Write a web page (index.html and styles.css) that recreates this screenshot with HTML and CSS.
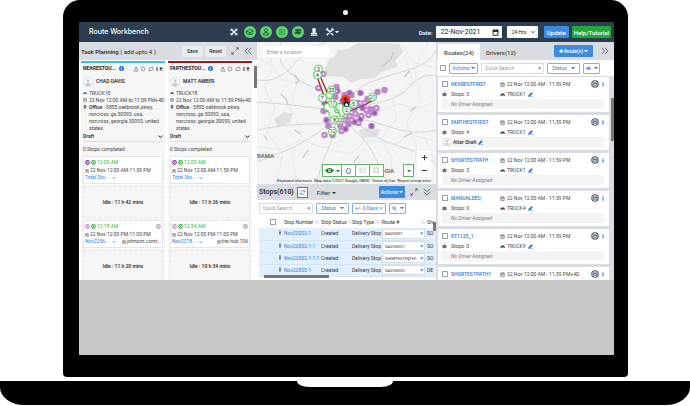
FILE: index.html
```html
<!DOCTYPE html>
<html lang="en">
<head>
    <meta charset="utf-8">
    <meta name="viewport" content="width=device-width, initial-scale=1">
    <link rel="stylesheet" href="styles.css">
    <title>Route Workbench</title>
</head>
<body>
<!-- shared icons -->
<svg class="sprite" aria-hidden="true">
    <symbol id="caret" viewBox="0 0 6 6"><path d="M0 1.500h6L3 5z" fill="currentColor"/></symbol>
    <symbol id="chevron" viewBox="0 0 6 6"><path d="M.8 1.800L3 4.200l2.200-2.400" fill="none" stroke="currentColor" stroke-width="1.200"/></symbol>
    <symbol id="expand" viewBox="0 0 10 10"><path d="M6 4l3-3M6.500 1H9v2.500M4 6L1 9M1 6.500V9h2.500" fill="none" stroke="currentColor"/></symbol>
    <symbol id="double" viewBox="0 0 10 10"><path d="M5 1L1.500 5 5 9M9 1L5.500 5 9 9" fill="none" stroke="currentColor"/></symbol>
    <symbol id="truck" viewBox="0 0 10 10"><path d="M1 8V5.500L3 3h5l1.500 2.500V8H8V7H3v1z" fill="currentColor"/></symbol>
    <symbol id="cal" viewBox="0 0 10 10"><path d="M1.500 2h7v7h-7zM1.500 4h7M3.500 1v2M6.500 1v2M3 6h4" fill="none" stroke="currentColor"/></symbol>
    <symbol id="pin" viewBox="0 0 10 10"><path d="M5 0a3.500 3.500 0 0 1 3.500 3.500C8.500 6 5 10 5 10S1.500 6 1.500 3.500A3.500 3.500 0 0 1 5 0z" fill="currentColor"/><circle cx="5" cy="3.500" r="1.300" fill="#fff"/></symbol>
    <symbol id="avatar" viewBox="0 0 12 12"><circle cx="6" cy="6" r="5.300" fill="#fff" stroke="#c3ccd4" stroke-width=".8"/><circle cx="6" cy="4.600" r="1.900" fill="#c3ccd4"/><path d="M2.500 9.500Q3 7 6 7t3.500 2.500Q6 12 2.500 9.500" fill="#c3ccd4"/></symbol>
    <symbol id="info" viewBox="0 0 10 10"><circle cx="5" cy="5" r="5" fill="#1a73e8"/><path d="M5 2v1.500M5 4.500V8" stroke="#fff" stroke-width="1.600"/></symbol>
    <symbol id="cardtools" viewBox="0 0 30 6"><path d="M3 1L1 5h4zM3 1v1.500" fill="none" stroke="#777" stroke-width=".7"/><circle cx="10" cy="3" r="1.900" fill="none" stroke="#777" stroke-width=".7"/><path d="M15.500 3.500q0-2 2.500-2h1.500M20.500 2.500q0 2-2.500 2h-1.500M19 .7l1 .8-1 .8M17 3.700l-1 .8 1 .8" fill="none" stroke="#777" stroke-width=".7"/><path d="M24 1v4" stroke="#333" stroke-width="1"/><path d="M26.800 1.600l2.400 2.800M29.200 1.600l-2.400 2.800" stroke="#111" stroke-width="1.100"/></symbol>
    <symbol id="stopdot" viewBox="0 0 10 10"><circle cx="5" cy="5" r="3.600" fill="#fff" stroke="currentColor" stroke-width="2.400"/><circle cx="5" cy="5" r="1.200" fill="currentColor"/></symbol>
    <symbol id="cube" viewBox="0 0 10 10"><path d="M5 1l4 2v4L5 9 1 7V3z" fill="#555"/><path d="M1.500 3.300L5 5l3.500-1.700M5 5v4" stroke="#ddd" stroke-width=".7" fill="none"/></symbol>
    <symbol id="pencil" viewBox="0 0 10 10"><path d="M1 9l.5-2.500L7 1l2 2-5.500 5.500zM5 9h5" fill="#1a73e8" stroke="#1a73e8"/></symbol>
    <symbol id="clock" viewBox="0 0 10 10"><circle cx="5" cy="5" r="4" fill="#fff" stroke="#465563" stroke-width="1.400"/><path d="M3 3.600h4v3H3zM3 4.500h4" fill="none" stroke="#465563"/></symbol>
    <symbol id="dots" viewBox="0 0 4 10"><path d="M2 1v2M2 4v2M2 7v2" stroke="currentColor" stroke-width="3"/></symbol>
    <symbol id="eye" viewBox="0 0 12 8"><path d="M0 4q6-7 12 0-6 7-12 0" fill="currentColor"/><circle cx="6" cy="4" r="2" fill="#fff"/><circle cx="6" cy="4" r="1" fill="currentColor"/></symbol>
    <symbol id="sort" viewBox="0 0 8 8"><path d="M2 7V1M.8 2.500L2 1l1.200 1.500M6 1v6M4.800 5.500L6 7l1.200-1.500" fill="none" stroke="#aaa" stroke-width=".8"/></symbol>
</svg>

<div class="laptop">
<div class="lid">
<span class="camera"></span>
<div class="screen">

<header class="navbar">
    <h1>Route Workbench</h1>
    <nav class="nav-icons">
        <button aria-label="Full screen"><svg viewBox="0 0 12 12"><path d="M3 3l6 6M9 3L3 9" stroke="#fff" stroke-width="1.600"/><path d="M2 2h3L2 5zM10 2v3L7 2zM2 10V7l3 3zM10 10H7l3-3z" fill="#fff"/></svg></button>
        <button class="round" aria-label="Routes"><svg viewBox="0 0 12 12"><path d="M2 5l4-2 4 2-4 2zM2 5v2.500l4 2 4-2M6 7v2" fill="none" stroke="#1f5138"/></svg></button>
        <button class="round" aria-label="Drivers"><svg viewBox="0 0 12 12"><circle cx="6" cy="4" r="1.800" fill="none" stroke="#1f5138"/><path d="M2.500 9.500Q3 6.500 6 6.500t3.500 3z" fill="none" stroke="#1f5138"/></svg></button>
        <button class="round" aria-label="Table"><svg viewBox="0 0 12 12"><path d="M3 3h6v6H3zM3 5h6M3 7h6M5 3v6" fill="none" stroke="#2d8e4c" stroke-width=".7"/></svg></button>
        <button class="round" aria-label="Signs"><svg viewBox="0 0 12 12"><path d="M3 3h6l1 1-1 1H3zM9 6H3L2 7l1 1h6zM6 2v8" fill="#1f5138" stroke="#1f5138" stroke-width=".5"/></svg></button>
        <button aria-label="Stamp"><svg viewBox="0 0 12 12"><path d="M4 1.500h4v3L7.500 7h2v1.500h-7V7h2L4 4.500zM2 9h8v1.500H2z" fill="#fff"/></svg></button>
        <button class="tools" aria-label="Tools"><svg viewBox="0 0 12 12"><path d="M2 2l8 8M10 2L2 10M1.500 3.500l2-2M8.500 1.500v2h2" fill="none" stroke="#fff" stroke-width="1.600"/></svg><svg class="caret"><use href="#caret"/></svg></button>
    </nav>
    <label class="date-label" for="date">Date:</label>
    <span class="date-box"><input id="date" type="text" value="22-Nov-2021"><svg viewBox="0 0 10 10"><path d="M1.500 2h7v7h-7zM3 0v2M7 0v2" fill="none" stroke="#111" stroke-width="1.200"/><path d="M1 2h8v2H1z" fill="#111"/></svg></span>
    <span class="select-box hours"><select aria-label="Hours"><option>24 Hrs</option></select><svg class="caret"><use href="#chevron"/></svg></span>
    <button class="btn primary update">Update</button>
    <button class="btn success">Help/Tutorial</button>
</header>

<main class="workbench">

<!-- task planning -->
<section class="planning">
    <div class="panel-bar">
        <h2>Task Planning <small>( add upto 4 )</small></h2>
        <button class="btn light">Save</button>
        <button class="btn light">Reset</button>
        <svg class="ico"><use href="#expand"/></svg>
        <svg class="ico"><use href="#double"/></svg>
    </div>
    <div class="tasks">
        <article class="task blue">
            <div class="task-title"><h3>NEARESTOU...</h3><svg class="info"><use href="#info"/></svg><svg class="cardtools"><use href="#cardtools"/></svg></div>
            <div class="driver"><svg><use href="#avatar"/></svg>CHAD DAVIS</div>
            <ul class="facts">
                <li><svg><use href="#truck"/></svg>TRUCK18</li>
                <li><svg><use href="#cal"/></svg>22 Nov 12:00 AM to 11:59 PM+4D</li>
                <li><svg><use href="#pin"/></svg><span><b>Office</b> - 5855 oakbrook pkwy,<br>norcross, ga 30093, usa,<br>norcross, georgia 30093, united<br>states</span></li>
            </ul>
            <div class="draft"><select aria-label="Route state"><option>Draft</option></select><svg class="caret"><use href="#chevron"/></svg></div>
            <p class="completed">0 Stops completed</p>
            <div class="stop">
                <div class="time"><svg class="purple"><use href="#stopdot"/></svg><svg><use href="#stopdot"/></svg>12:00 AM</div>
                <div class="span"><svg><use href="#cal"/></svg>22 Nov 12:00 AM-11:59 PM</div>
                <div class="ref"><a href="#">Total Sto...</a><svg class="caret"><use href="#chevron"/></svg></div>
            </div>
            <div class="idle">Idle : 11 h 42 mins</div>
            <div class="stop">
                <div class="time"><svg class="lilac"><use href="#stopdot"/></svg><svg><use href="#stopdot"/></svg>12:18 AM<svg class="gear"><use href="#stopdot"/></svg></div>
                <div class="span"><svg><use href="#cal"/></svg>22 Nov 12:00 PM-11:00 PM</div>
                <div class="ref"><a href="#">Nov2256...</a><svg class="caret"><use href="#chevron"/></svg><span><svg><use href="#cal"/></svg>johnson contr...</span></div>
            </div>
            <div class="idle">Idle : 11 h 20 mins</div>
        </article>
        <article class="task red">
            <div class="task-title"><h3>FARTHESTOU...</h3><svg class="info"><use href="#info"/></svg><svg class="cardtools"><use href="#cardtools"/></svg></div>
            <div class="driver"><svg><use href="#avatar"/></svg>MATT AMBER</div>
            <ul class="facts">
                <li><svg><use href="#truck"/></svg>TRUCK18</li>
                <li><svg><use href="#cal"/></svg>22 Nov 12:00 AM to 11:59 PM+4D</li>
                <li><svg><use href="#pin"/></svg><span><b>Office</b> - 5855 oakbrook pkwy,<br>norcross, ga 30093, usa,<br>norcross, georgia 30093, united<br>states</span></li>
            </ul>
            <div class="draft"><select aria-label="Route state"><option>Draft</option></select><svg class="caret"><use href="#chevron"/></svg></div>
            <p class="completed">0 Stops completed</p>
            <div class="stop">
                <div class="time"><svg class="purple"><use href="#stopdot"/></svg><svg><use href="#stopdot"/></svg>12:00 AM</div>
                <div class="span"><svg><use href="#cal"/></svg>22 Nov 12:00 AM-11:59 PM</div>
                <div class="ref"><a href="#">Total Sto...</a><svg class="caret"><use href="#chevron"/></svg></div>
            </div>
            <div class="idle">Idle : 11 h 26 mins</div>
            <div class="stop">
                <div class="time"><svg class="lilac"><use href="#stopdot"/></svg><svg><use href="#stopdot"/></svg>12:34 AM<svg class="gear"><use href="#stopdot"/></svg></div>
                <div class="span"><svg><use href="#cal"/></svg>22 Nov 12:00 PM-11:00 PM</div>
                <div class="ref"><a href="#">Nov2218...</a><svg class="caret"><use href="#chevron"/></svg><span><svg><use href="#cal"/></svg>tire hub 106</span></div>
            </div>
            <div class="idle">Idle : 10 h 34 mins</div>
        </article>
        <span class="thumb"></span>
    </div>
</section>

<!-- map and stops -->
<section class="center">
    <div class="map">
        <svg class="map-art" viewBox="0 0 180 142" preserveAspectRatio="xMidYMid slice">
            <path fill="#e0e0e0" d="M73 17l5-3 4-6 9-1 10-6h30l12 1 4 8-8 8 2 7-16 5-7 6-14 1-9 4-8-6-16-1-3-8zM18 77l10-7 8 2-2 8-12 6zM102 88l12-3 10 3-4 7-14 1z"/>
            <g fill="none" stroke="#d6d6d6" stroke-width="1">
                <path d="M0 38q20 4 36-14T70 0M0 60q30 2 52 5t30 2 34-5 38-18 26-10M24 0q-4 20 8 30t26 16 20 18 20 24 22 30 12 24M0 88q30-6 54-6t36-4 40 6 50 4M60 142q4-20 12-36t8-38M84 66q14-20 30-26t38-12 28-20M0 120q30-10 50-22t30-24M100 80q20 18 42 24t38 18"/>
            </g>
            <g fill="none" stroke="#e4e4e4" stroke-width=".7">
                <path d="M0 16l16 8 10 14 24 4 10 14M10 0l6 24-8 20 10 22-8 24 16 22-6 30M40 142l-4-30 10-22-12-24 6-24-8-20M130 142l6-26-12-18 16-22-4-20 20-16-6-22M180 60l-20 6-18-4-22 8M180 100l-26-8-14 10-30-4-16 14-20-4M106 142l-4-28 10-16M156 142l4-38-10-24 14-22-6-30 14-28M0 104l24 4 20-10 24 8 18-8M166 88l14 38M144 0l12 20 24 6"/>
            </g>
            <path fill="none" stroke="#c4c4c4" stroke-width="1.200" d="M38 32l4 7-3 3M24 52l6 5 1 6M126 24l8-6 3-8M38 88l6 4M52 108l-6 8M147 95l8-4M154 69l5-4M102 114l-5 7M7 93l4 5M148 35l5-6"/>
            <path stroke="#a51c1c" stroke-width="1.300" fill="none" d="M61 36l7 19M64 35l8 19M92 70l24-11M70 60l10 16"/>
            <!-- clustered stops -->
            <g fill="none" stroke-linecap="round">
                <path stroke="#a04fb0" stroke-opacity=".65" stroke-width="6.500" d="M67 32h0M62 46h0M80 45h0M81 49h0M93 51h0M104 51h0M95 53h0M121 50h0M128 48h0M111 57h0M120 66h0M118 71h0M115 84h0M70 78h0M68 93h0M76 93h0M85 89h0M89 87h0M95 78h0M102 81h0M99 72h0M105 74h0M110 68h0M112 73h0M106 66h0M102 61h0M108 61h0M86 59h0M88 53h0M79 55h0M70 67h0M67 69h0M88 78h0M92 82h0M84 84h0M72 84h0M98 67h0M104 77h0M87 63h0M93 74h0M79 73h0M114 67h0M68 61h0M98 80h0"/>
                <path stroke="#8a3c9c" stroke-width="4" stroke-opacity=".6" d="M93 51h0M81 49h0M104 51h0M115 84h0M118 71h0M106 66h0M104 77h0M89 87h0M98 80h0M68 61h0M70 78h0"/>
                <path stroke="#e6cdea" stroke-width="2.500" d="M67 32h0M62 46h0M80 49h0M104 61h0M110 68h0M120 66h0M105 74h0M95 78h0M102 81h0M68 93h0M85 89h0M88 78h0M112 73h0M99 72h0M93 74h0M115 57h0M108 61h0"/>
                <path stroke="#4fcf5a" stroke-width="8" d="M73 53h0M71 65h0M75 68h0M83 65h0M86 70h0M80 74h0M76 72h0M84 76h0"/>
                <path stroke="#f4f8ef" stroke-width="6" d="M73 53h0M71 65h0M75 68h0M83 65h0M86 70h0M80 74h0M76 72h0M84 76h0"/>
            </g>
            <g class="pins">
                <circle cx="62" cy="27" r="4"/><text x="62" y="29">3</text>
                <circle cx="61" cy="33" r="4"/><text x="61" y="35">4</text>
                <circle cx="66" cy="56" r="4"/><text x="66" y="58">7</text>
                <circle cx="75" cy="48" r="4"/><text x="75" y="50">33</text>
                <circle cx="76" cy="61" r="4"/><text x="76" y="63">17</text>
                <circle cx="116" cy="55" r="4"/><text x="116" y="57">21</text>
                <circle cx="97" cy="62" r="4"/><text x="97" y="64">5</text>
                <circle cx="90" cy="68" r="4"/><text x="90" y="70">2</text>
                <circle cx="78" cy="78" r="4"/><text x="78" y="80">8</text>
                <circle cx="83" cy="78" r="4"/><text x="83" y="80">22</text>
                <circle cx="76" cy="89" r="4"/><text x="76" y="91">12</text>
            </g>
            <circle cx="89" cy="58" r="5" fill="#f23d2e"/><circle cx="89" cy="57" r="2" fill="#8d1710"/>
            <circle cx="90" cy="62" r="3" fill="#16294f"/><path d="M88.500 62.500l1.500-1.500 1.500 1.500v1.500h-3z" fill="#fff"/>
        </svg>
        <input class="location" type="text" placeholder="Enter a location" aria-label="Enter a location">
        <span class="state left">BAMA</span>
        <div class="map-controls">
            <div class="map-group">
                <button class="eye" aria-label="Visibility"><svg><use href="#eye"/></svg><svg class="caret"><use href="#caret"/></svg></button>
                <button aria-label="Pan"><svg viewBox="0 0 10 10"><path d="M3 9L1.500 6l1.500-.5V2.500q1-1 1.500 0 .5-1.500 1.500 0 1-.8 1.500.8v3L7 9z" fill="none" stroke="#555"/></svg></button>
                <button aria-label="Polygon"><svg viewBox="0 0 10 10"><path d="M1 2l3 2 4-3 1 6-6 1z" fill="none" stroke="#888" stroke-dasharray="1.500 1"/></svg></button>
                <button aria-label="Rectangle"><svg viewBox="0 0 10 10"><path d="M1.500 1.500h6v6h-6zM7 7l2 2" fill="none" stroke="#888" stroke-dasharray="1.500 .7"/></svg></button>
            </div>
            <span class="state">GIA</span>
            <button class="more" aria-label="More"><svg class="caret"><use href="#caret"/></svg></button>
            <div class="zoom"><button aria-label="Zoom in"><svg viewBox="0 0 8 8"><path d="M1 4h6M4 1v6" stroke="#444" stroke-width="1.300"/></svg></button><button aria-label="Zoom out"><svg viewBox="0 0 8 8"><path d="M1 4h6" stroke="#444" stroke-width="1.300"/></svg></button></div>
        </div>
        <div class="credits"><span>Keyboard shortcuts</span><span>Map data ©2021 Google, INEGI</span><a href="#">Terms of Use</a><a href="#">Report a map error</a></div>
    </div>
    <div class="panel-bar stops-bar">
        <h2>Stops(610)</h2>
        <button class="refresh" aria-label="Refresh"><svg viewBox="0 0 10 10"><path d="M2 4a3.300 3.300 0 0 1 6 0M8 6a3.300 3.300 0 0 1-6 0M8.500 1.500V4H6M1.500 8.500V6H4" fill="none" stroke="#2b7de1"/></svg></button>
        <button class="filter">Filter <svg class="caret"><use href="#caret"/></svg></button>
        <button class="btn primary">Actions <svg class="caret"><use href="#caret"/></svg></button>
        <svg class="ico"><use href="#expand"/></svg>
        <svg class="ico down"><use href="#double"/></svg>
    </div>
    <div class="toolbar">
        <span class="search"><input type="text" placeholder="Quick Search" aria-label="Quick search stops">×</span>
        <button class="outline status">Status <svg class="caret"><use href="#caret"/></svg></button>
        <button class="outline">+/- 0 Days <svg class="caret"><use href="#chevron"/></svg></button>
        <button class="outline find" aria-label="Find"><svg viewBox="0 0 10 10"><circle cx="4" cy="4" r="2.500" fill="none" stroke="currentColor" stroke-width="1.500"/><path d="M6 6l3 3" stroke="currentColor" stroke-width="1.500"/></svg><svg class="caret"><use href="#caret"/></svg></button>
    </div>
    <div class="stops">
        <table>
            <colgroup><col class="c-check"><col class="c-number"><col class="c-status"><col class="c-type"><col class="c-route"><col></colgroup>
            <tr><th><input type="checkbox" aria-label="Select all"></th><th>Stop Number <svg><use href="#sort"/></svg></th><th>Stop Status <svg><use href="#sort"/></svg></th><th>Stop Type <svg><use href="#sort"/></svg></th><th><span class="route-head">Route # <svg><use href="#sort"/></svg></span></th><th>Shi</th></tr>
            <tr><td><svg class="dots"><use href="#dots"/></svg></td><td><a href="#">Nov22002-1</a></td><td>Created</td><td>Delivery Stop</td><td><span class="route-box">DAVIS001 <b>×</b></span></td><td>SO</td></tr>
            <tr><td><svg class="dots"><use href="#dots"/></svg></td><td><a href="#">Nov22002-1-1</a></td><td>Created</td><td>Delivery Stop</td><td><span class="route-box">DAVIS0031 <b>×</b></span></td><td>SO</td></tr>
            <tr><td><svg class="dots"><use href="#dots"/></svg></td><td><a href="#">Nov22002-1-1-1</a></td><td>Created</td><td>Delivery Stop</td><td><span class="route-box">SHORTESTPATH1 <b>×</b></span></td><td>SO</td></tr>
            <tr><td><svg class="dots"><use href="#dots"/></svg></td><td><a href="#">Nov22003-1</a></td><td>Created</td><td>Delivery Stop</td><td><span class="route-box">DAVIS0002 <b>×</b></span></td><td>DE</td></tr>
        </table>
        <span class="thumb"></span>
        <span class="thumb across"></span>
    </div>
</section>

<!-- routes -->
<section class="routes">
    <div class="panel-bar tabs">
        <button class="tab active">Routes(24)</button>
        <button class="tab">Drivers(12)</button>
        <button class="btn primary"><b>✚</b> Route(s) <svg class="caret"><use href="#caret"/></svg></button>
        <svg class="ico flip"><use href="#double"/></svg>
    </div>
    <div class="toolbar">
        <input type="checkbox" aria-label="Select all routes">
        <button class="outline">Actions <svg class="caret"><use href="#caret"/></svg></button>
        <span class="search"><input type="text" placeholder="Quick Search" aria-label="Quick search routes">×</span>
        <button class="outline status">Status <svg class="caret"><use href="#caret"/></svg></button>
        <button class="outline look" aria-label="Columns"><svg class="eye-ico"><use href="#eye"/></svg><svg class="caret"><use href="#caret"/></svg></button>
    </div>
    <div class="route-list">
        <article class="route">
            <input type="checkbox" aria-label="NEARESTFIRST"><a href="#">NEARESTFIRST</a><span><svg><use href="#cal"/></svg>22 Nov 12:00 AM - 11:59 PM</span><svg class="clock"><use href="#clock"/></svg><svg class="dots"><use href="#dots"/></svg>
            <svg><use href="#cube"/></svg><span>Stops: 3</span><span class="truck"><svg><use href="#truck"/></svg>TRUCK1<svg class="pencil"><use href="#pencil"/></svg></span>
            <p>No Driver Assigned</p>
        </article>
        <article class="route">
            <input type="checkbox" aria-label="FARTHESTFIRST"><a href="#">FARTHESTFIRST</a><span><svg><use href="#cal"/></svg>22 Nov 12:00 AM - 11:59 PM</span><svg class="clock"><use href="#clock"/></svg><svg class="dots"><use href="#dots"/></svg>
            <svg><use href="#cube"/></svg><span>Stops: 4</span><span class="truck"><svg><use href="#truck"/></svg>TRUCK1<svg class="pencil"><use href="#pencil"/></svg></span>
            <p class="assigned"><svg><use href="#avatar"/></svg>Altar Shafi<svg class="pencil"><use href="#pencil"/></svg></p>
        </article>
        <article class="route">
            <input type="checkbox" aria-label="SHORTESTPATH"><a href="#">SHORTESTPATH</a><span><svg><use href="#cal"/></svg>22 Nov 12:00 AM - 11:59 PM</span><svg class="clock"><use href="#clock"/></svg><svg class="dots"><use href="#dots"/></svg>
            <svg><use href="#cube"/></svg><span>Stops: 3</span><span class="truck"><svg><use href="#truck"/></svg>TRUCK1<svg class="pencil"><use href="#pencil"/></svg></span>
            <p>No Driver Assigned</p>
        </article>
        <article class="route">
            <input type="checkbox" aria-label="MANUALSEQ"><a href="#">MANUALSEQ</a><span><svg><use href="#cal"/></svg>22 Nov 12:00 AM - 11:59 PM</span><svg class="clock"><use href="#clock"/></svg><svg class="dots"><use href="#dots"/></svg>
            <svg><use href="#cube"/></svg><span>Stops: 0</span><span class="truck"><svg><use href="#truck"/></svg>TRUCK4<svg class="pencil"><use href="#pencil"/></svg></span>
            <p>No Driver Assigned</p>
        </article>
        <article class="route">
            <input type="checkbox" aria-label="RT1125_1"><a href="#">RT1125_1</a><span><svg><use href="#cal"/></svg>22 Nov 12:00 AM - 11:59 PM</span><svg class="clock"><use href="#clock"/></svg><svg class="dots"><use href="#dots"/></svg>
            <svg><use href="#cube"/></svg><span>Stops: 0</span><span class="truck"><svg><use href="#truck"/></svg>TRUCK9<svg class="pencil"><use href="#pencil"/></svg></span>
            <p>No Driver Assigned</p>
        </article>
        <article class="route">
            <input type="checkbox" aria-label="SHORTESTPATH1"><a href="#">SHORTESTPATH1</a><span><svg><use href="#cal"/></svg>22 Nov 12:00 AM - 11:59 PM+4D</span><svg class="clock"><use href="#clock"/></svg><svg class="dots"><use href="#dots"/></svg>
        </article>
        <span class="thumb"></span>
    </div>
</section>

</main>
</div>
</div>
<div class="base"><span class="notch"></span></div>
</div>
</body>
</html>
```
FILE: styles.css
```css
* {
    box-sizing: border-box;
}
body {
    margin: 0;
    background: #fff;
    color: #333;
    font: 5px/7px Roboto, "Liberation Sans", sans-serif;
}
h1, h2, h3, p, ul {
    margin: 0;
    padding: 0;
}
button, input, select {
    margin: 0;
    padding: 0;
    border: 0;
    background: none;
    color: inherit;
    font: inherit;
    min-width: 0;
}
select {
    appearance: none;
    width: 100%;
}
svg {
    width: 5px;
    height: 5px;
    flex: none;
}
a {
    color: #2b7de1;
    text-decoration: none;
}
input[type=checkbox] {
    appearance: none;
    width: 6px;
    height: 6px;
    border: 1px solid #9aa4ad;
    background: #fff;
    flex: none;
}
input::placeholder {
    color: #999;
}
.sprite {
    position: absolute;
    width: 0;
    height: 0;
}
.caret {
    width: 4px;
    height: 4px;
}

/* laptop */
.laptop {
    overflow: hidden;
}
.lid {
    position: relative;
    margin: 0 62px 0 63px;
    padding: 22px 14px 22px 16px;
    background: #000;
    border-radius: 17px 17px 4px 4px;
}
.camera {
    position: absolute;
    top: 10px;
    left: 50%;
    width: 5px;
    height: 5px;
    margin-left: -3px;
    border-radius: 50%;
    background: #fff;
}
.screen {
    background: #c7c7c7;
    padding-bottom: 75px;
}
.base {
    height: 24px;
    margin-top: 4px;
    background: #000;
    border-radius: 0 0 24px 24px / 0 0 18px 18px;
}
.notch {
    display: block;
    width: 96px;
    height: 6px;
    margin: 0 auto;
    background: #fff;
    border-radius: 0 0 12px 12px / 0 0 6px 6px;
}

/* top bar */
.navbar {
    display: flex;
    align-items: center;
    height: 20px;
    padding: 0 3px 0 10px;
    background: #2c3e50;
    color: #fff;
}
.navbar h1 {
    width: 139px;
    font: 500 7px/10px Inter, sans-serif;
}
.nav-icons {
    display: flex;
    align-items: center;
    gap: 4px;
    flex: 1;
}
.nav-icons button {
    display: flex;
    align-items: center;
    justify-content: center;
    width: 12px;
    height: 12px;
}
.nav-icons svg {
    width: 10px;
    height: 10px;
}
.nav-icons .round {
    border-radius: 50%;
    background: #5fd46b;
}
.nav-icons .tools {
    width: 15px;
}
.nav-icons .caret {
    width: 4px;
    height: 4px;
}
.date-label {
    font-size: 6px;
    font-weight: 500;
    margin-right: 3px;
}
.date-box, .select-box {
    display: flex;
    align-items: center;
    height: 12px;
    padding: 0 3px 0 5px;
    background: #fff;
    color: #222;
}
.date-box {
    width: 66px;
    font-size: 7px;
    margin-right: 5px;
}
.date-box input {
    flex: 1;
}
.date-box svg {
    width: 7px;
    height: 7px;
}
.hours {
    width: 31px;
    margin-right: 6px;
    border-radius: 1px;
}
.btn {
    height: 12px;
    padding: 0 4px;
    border-radius: 1px;
    font-weight: 500;
    white-space: nowrap;
}
.primary {
    background: #3d8ae3;
    color: #fff;
}
.success {
    background: #21a83c;
    color: #fff;
    font-size: 6px;
    padding: 0 2px;
}
.update {
    font-size: 6px;
    padding: 0 3px;
    margin-right: 3px;
}

/* panels */
.workbench {
    display: grid;
    grid-template-columns: 178fr 180fr 177fr;
    height: 238px;
    overflow: hidden;
}
.workbench > section {
    min-width: 0;
    overflow: hidden;
    background: #fff;
}
.panel-bar {
    display: flex;
    align-items: center;
    height: 18px;
    padding: 0 5px 0 2px;
    background: #d9dde1;
}
.panel-bar h2 {
    flex: 1;
    font-size: 6px;
    font-weight: 500;
    color: #222;
    white-space: nowrap;
}
.panel-bar small {
    font-size: 6px;
    font-weight: 400;
}
.ico {
    width: 8px;
    height: 8px;
    margin-left: 5px;
    color: #4b5763;
}
.down {
    transform: rotate(-90deg);
}
.flip {
    transform: rotate(180deg);
}
.light {
    height: 11px;
    width: 21px;
    background: #e9ebed;
    margin-left: 2px;
}
.thumb {
    position: absolute;
    right: 0;
    width: 3px;
    background: #777;
}

/* task planning */
.tasks {
    position: relative;
    display: grid;
    grid-template-columns: 1fr 1fr;
    gap: 3px;
    padding: 1px 5px 0 2px;
}
.tasks .thumb {
    top: 6px;
    height: 22px;
}
.task {
    min-width: 0;
    background: #f6f6f6;
    border-top: 2px solid #25c7f5;
    padding: 0 2px;
    color: #444;
}
.task.red {
    border-color: #b11217;
}
.task-title {
    display: flex;
    align-items: center;
    height: 11px;
}
.task-title h3 {
    font-size: 5px;
    font-weight: 700;
    color: #222;
}
.task-title .info {
    margin: 0 auto 0 3px;
}
.task-title .cardtools {
    width: 30px;
    height: 6px;
}
.driver {
    display: flex;
    align-items: center;
    gap: 3px;
    height: 15px;
    margin-bottom: 1px;
    font-weight: 500;
    color: #222;
}
.driver svg {
    width: 10px;
    height: 10px;
}
.facts {
    list-style: none;
    white-space: nowrap;
}
.facts li {
    display: flex;
    gap: 2px;
}
.facts svg {
    width: 4px;
    height: 4px;
    margin-top: 1px;
    color: #555;
}
.facts b {
    font-weight: 500;
    color: #222;
}
.draft {
    display: flex;
    align-items: center;
    height: 10px;
    margin-bottom: 1px;
    border-bottom: 1px solid #ddd;
    font-weight: 500;
    color: #222;
}
.draft .caret {
    width: 5px;
    height: 5px;
}
.completed {
    padding: 3px 0;
}
.stop, .idle {
    border: 1px solid #e6e6e6;
    margin-bottom: 2px;
}
.stop {
    height: 28px;
    padding: 1px 1px 0;
    background: #fff;
    white-space: nowrap;
}
.stop div {
    display: flex;
    align-items: center;
    gap: 1px;
}
.time {
    height: 9px;
    color: #2eb844;
}
.time svg {
    color: #2eb844;
}
.time .purple {
    color: #8e3aa5;
}
.time .lilac {
    color: #c48fd0;
}
.time .gear {
    color: #aaa;
    margin-left: auto;
}
.span svg, .ref span svg {
    width: 4px;
    height: 4px;
}
.ref .caret {
    color: #2b9be1;
    margin-left: 2px;
}
.ref span {
    display: flex;
    align-items: center;
    gap: 1px;
    margin-left: auto;
}
.idle {
    height: 32px;
    display: flex;
    align-items: center;
    justify-content: center;
    border-style: dashed;
    font-weight: 500;
    color: #222;
}

/* map */
.center {
    border-right: 1px solid #d9dde1;
}
.map {
    position: relative;
    display: flex;
    flex-direction: column;
    height: 142px;
    padding: 4px 5px 0 6px;
    background: #f5f5f5;
}
.map-art {
    position: absolute;
    top: 0;
    left: 0;
    width: 100%;
    height: 100%;
}
.pins circle {
    fill: #fff;
    stroke: #4fcf5a;
}
.pins text {
    font-size: 5px;
    text-anchor: middle;
    fill: #222;
}
.location {
    position: relative;
    width: 66px;
    height: 11px;
    padding-left: 4px;
    background: #fff;
}
.state {
    position: relative;
    font-size: 6px;
    font-weight: 500;
    color: #555;
}
.state.left {
    position: absolute;
    left: 0;
    top: 110px;
}
.map-controls {
    position: relative;
    display: flex;
    align-items: flex-end;
    margin: auto 0 1px;
    justify-content: flex-end;
}
.map-group {
    display: flex;
}
.map-controls button {
    display: flex;
    align-items: center;
    justify-content: center;
    gap: 2px;
    height: 13px;
    width: 14px;
    background: #fff;
    border: 1px solid #64b56c;
    border-left-width: 0;
    color: #167c22;
}
.map-controls .eye {
    width: 20px;
    border-left-width: 1px;
}
.map-controls svg {
    width: 7px;
    height: 7px;
}
.map-controls .caret {
    width: 4px;
    height: 4px;
}
.map-controls .eye svg:first-child {
    width: 9px;
}
.map-controls .state {
    margin-bottom: 3px;
}
.map-controls .more {
    width: 11px;
    border-left-width: 1px;
    margin: 0 3px 0 9px;
}
.map-controls .zoom button {
    width: 14px;
    border: 0;
}
.credits {
    position: relative;
    display: flex;
    justify-content: space-between;
    padding-left: 14px;
    font-size: 4px;
    line-height: 6px;
    white-space: nowrap;
    color: #222;
}
.credits a {
    color: #222;
}

/* stops */
.stops-bar {
    height: 16px;
}
.stops-bar h2 {
    flex: none;
    font-size: 7px;
}
.stops-bar .btn {
    padding: 0 2px;
}
.refresh {
    display: flex;
    align-items: center;
    justify-content: center;
    width: 11px;
    height: 11px;
    margin: 0 9px 0 3px;
    border: 1px solid #2b7de1;
    background: #fff;
}
.refresh svg {
    width: 7px;
    height: 7px;
}
.filter {
    font-size: 6px;
    margin-right: auto;
}
.toolbar {
    display: flex;
    align-items: center;
    gap: 3px;
    height: 16px;
    padding: 0 4px 0 2px;
}
.search {
    display: flex;
    align-items: center;
    flex: 1;
    min-width: 0;
    height: 11px;
    padding: 0 2px 0 3px;
    border: 1px solid #ddd;
    color: #444;
}
.search input {
    flex: 1;
    width: 20px;
}
.outline {
    height: 11px;
    padding: 0 2px;
    border: 1px solid #7fb1ec;
    border-radius: 1px;
    color: #2b7de1;
    background: #fff;
    white-space: nowrap;
}
.status {
    width: 33px;
}
.status .caret {
    margin-left: 3px;
}
.find, .look {
    display: flex;
    align-items: center;
    justify-content: center;
    gap: 3px;
    width: 17px;
}
.center .toolbar {
    padding-right: 30px;
}
.stops {
    position: relative;
    overflow: hidden;
    height: 62px;
    margin-left: 2px;
}
.stops table {
    width: 100%;
    table-layout: fixed;
    border-collapse: collapse;
    white-space: nowrap;
}
.c-check { width: 25px; }
.c-number { width: 37px; }
.c-status { width: 31px; }
.c-type { width: 30px; }
.c-route { width: 45px; }
.stops th, .stops td {
    height: 12px;
    padding: 0;
    text-align: left;
    font-weight: 400;
    line-height: 7px;
}
.stops td {
    background: #e2effd;
    border-bottom: 1px solid #d6e5f5;
}
.stops th:first-child, .stops td:first-child {
    text-align: right;
    padding-right: 3px;
}
.stops th:first-child {
    padding-right: 8px;
}
.stops th svg {
    width: 4px;
    height: 4px;
}
.stops input {
    display: inline-block;
    vertical-align: middle;
}
.dots {
    width: 2px;
    height: 5px;
}
.route-head, .route-box {
    display: flex;
    justify-content: space-between;
    align-items: center;
    width: 43px;
}
.route-box {
    height: 10px;
    padding: 0 1px 0 2px;
    border: 1px solid #d5dde5;
    background: #fff;
    font-size: 4px;
}
.route-box b {
    font-size: 5px;
    color: #2b7de1;
}
.stops .thumb {
    top: 6px;
    height: 9px;
}
.stops .thumb.across {
    top: 59px;
    left: 5px;
    width: 65px;
    height: 3px;
}

/* routes */
.tabs {
    padding-left: 1px;
}
.tab {
    align-self: flex-end;
    width: 42px;
    height: 16px;
    font-size: 6px;
    font-weight: 500;
    color: #444;
}
.tab.active {
    background: #fff;
}
.tabs .btn {
    margin-left: auto;
    width: 39px;
    font-size: 5px;
    padding: 0;
}
.tabs .ico {
    margin-left: 8px;
}
.routes .toolbar {
    padding: 0 14px 0 3px;
}
.routes .outline:not(.look):not(.status) {
    width: 29px;
}
.route-list {
    position: relative;
    display: grid;
    gap: 3px;
    padding: 1px 5px 0 1px;
    background: #d9dde1;
}
.route-list .thumb {
    top: 22px;
    height: 43px;
}
.route {
    display: grid;
    grid-template-columns: 6px 46px 1fr 8px 2px;
    grid-template-rows: 10px 10px 10px;
    align-items: center;
    column-gap: 3px;
    height: 35px;
    padding: 2px 5px 0 4px;
    background: #fff;
    white-space: nowrap;
    color: #444;
}
.route > a {
    font-weight: 500;
}
.route span {
    display: flex;
    align-items: center;
    gap: 2px;
}
.route .clock {
    width: 8px;
    height: 8px;
}
.route .dots {
    height: 7px;
    color: #2b7de1;
}
.route .truck {
    grid-column: 3 / 6;
}
.route p {
    grid-column: 1 / 6;
    align-self: stretch;
    line-height: 10px;
    padding-left: 9px;
    background: #f4f4f4;
    color: #777;
    font-style: italic;
}
.route .assigned {
    display: flex;
    align-items: center;
    gap: 2px;
    padding-left: 1px;
    font-style: normal;
    font-weight: 500;
    color: #333;
}
.assigned svg:first-child {
    width: 8px;
    height: 8px;
}
```
